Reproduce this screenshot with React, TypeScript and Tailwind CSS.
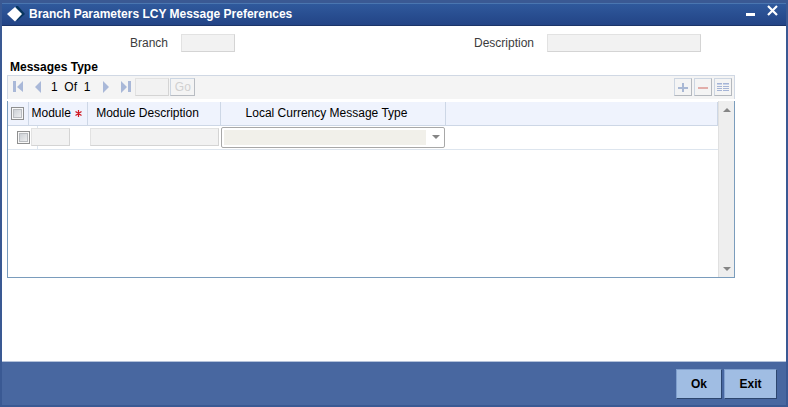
import type { ReactNode } from "react";

const field = "block border border-[#d4d4d4] border-t-[#e2e2e2] border-l-[#e2e2e2] bg-[#f2f2f2] h-[18px] text-xs px-1";
const checkbox =
  "appearance-none block h-[13px] w-[13px] shrink-0 border border-[#8e8f8f] bg-linear-to-br from-[#c4c9cf] to-[#f6f6f6] shadow-[inset_0_0_0_1px_#f8f8f8,inset_0_0_0_2px_#b9bcc0]";

function Field({ id, label, width }: { id: string; label: string; width: string }) {
  return (
    <div className="flex items-center gap-[13px]">
      <label htmlFor={id} className="w-[161px] text-right text-[#3c3c3c]">
        {label}
      </label>
      <input id={id} disabled className={`${field} ${width}`} />
    </div>
  );
}

function NavButton({ label, children }: { label: string; children: ReactNode }) {
  return (
    <button type="button" aria-label={label} className="text-[#a9b8d8]">
      <svg width="12" height="12" viewBox="0 0 12 12" fill="currentColor">
        {children}
      </svg>
    </button>
  );
}

function ToolButton({ label, children }: { label: string; children: ReactNode }) {
  return (
    <button
      type="button"
      aria-label={label}
      className="flex h-[18px] w-[18px] items-center justify-center border border-[#b4b8be] border-t-[#cdd6e2] border-l-[#cdd6e2]"
    >
      <svg width="12" height="12" viewBox="0 0 12 12" shapeRendering="crispEdges">
        {children}
      </svg>
    </button>
  );
}

function Arrow({ up }: { up?: boolean }) {
  return (
    <svg width="8" height="4" viewBox="0 0 8 4" fill="#858585">
      <path d={up ? "M0 4L4 0L8 4Z" : "M0 0L4 4L8 0Z"} />
    </svg>
  );
}

const footerButton =
  "h-[30px] border border-[#7f9fce] border-r-[#2c466f] border-b-[#2c466f] bg-[#a0bde3] text-xs font-bold text-black";

export default function App() {
  return (
    <div className="flex min-h-screen flex-col border-2 border-t-[3px] border-[#3a5993] bg-white font-['Liberation_Sans',Arial,sans-serif] text-xs text-black">
      <header className="flex h-[23px] items-center border-t border-b border-t-[#4a76b0] border-b-[#1b3468] bg-linear-to-b from-[#2f599c] to-[#234486] pr-2 pl-[5px] text-white">
        <svg width="18" height="16" viewBox="0 0 18 16" className="mb-[2px]">
          <path d="M9 0H11L18 8L10 15Z" fill="#07365f" />
          <path d="M8 1L15 8L8 15.500L0 8Z" fill="#fff" />
        </svg>
        <h1 className="ml-1 flex-1 pb-px text-xs font-bold">Branch Parameters LCY Message Preferences</h1>
        <button type="button" aria-label="Minimize" className="mr-3 mb-2">
          <svg width="9" height="12" viewBox="0 0 9 12">
            <path d="M0 8h9v3H0z" fill="#fff" />
          </svg>
        </button>
        <button type="button" aria-label="Close" className="mb-2">
          <svg width="11" height="11" viewBox="0 0 11 11">
            <path d="M1 1L10 10M10 1L1 10" stroke="#fff" strokeWidth="2.200" />
          </svg>
        </button>
      </header>

      <main className="flex-1 pt-2 pr-[51px] pb-4 pl-[5px]">
        <div className="grid grid-cols-2 gap-x-1">
          <Field id="branch" label="Branch" width="w-[54px]" />
          <Field id="description" label="Description" width="w-[154px]" />
        </div>

        <h2 className="mt-[7px] pl-[3px] text-xs leading-4 font-bold">Messages Type</h2>

        <div className="flex h-6 items-center border-t border-r border-l border-[#d0d8e4] bg-[#f4f4f4] pr-[2px] pb-px pl-[5px]">
          <div className="flex gap-2">
            <NavButton label="First">
              <path d="M0 0h3v11H0zM10 0v11L4 6z" />
            </NavButton>
            <NavButton label="Previous">
              <path d="M8 0v12L2 6z" />
            </NavButton>
          </div>
          <span className="ml-[6px]">1&nbsp; Of&nbsp; 1</span>
          <div className="ml-3 flex gap-[6px]">
            <NavButton label="Next">
              <path d="M1 0v12L7 6z" />
            </NavButton>
            <NavButton label="Last">
              <path d="M8 0h3v11H8zM1 0v12L7 6z" />
            </NavButton>
          </div>
          <input aria-label="Page" disabled className={`${field} ml-[3px] w-[34px]`} />
          <button
            type="button"
            disabled
            className="ml-px h-[18px] w-[25px] border border-[#b8bcc2] border-t-[#ccd6e2] border-l-[#ccd6e2] text-[#d0d0d0]"
          >
            Go
          </button>
          <div className="ml-auto flex gap-[2px]">
            <ToolButton label="Add row">
              <path d="M5 2h2v9H5zM1 6h10v2H1z" fill="#a9b8d4" />
            </ToolButton>
            <ToolButton label="Delete row">
              <path d="M1 6h10v2H1z" fill="#e2aeaa" />
            </ToolButton>
            <ToolButton label="Single record view">
              <path d="M0 2h5v1H0zM6 2h6v1H6zM0 5h5v1H0zM6 5h6v1H6zM0 7h5v1H0zM6 7h6v1H6zM0 9h5v1H0zM6 9h6v1H6z" fill="#a5b4d6" />
              <path d="M0 3h5v1H0zM6 3h6v1H6z" fill="#c9d3e8" />
            </ToolButton>
          </div>
        </div>

        <div className="mt-[2px] flex h-[177px] border-r border-b border-l border-[#7a9cbc]">
          <div className="flex-1 pt-px">
            <table className="w-full table-fixed border-collapse">
              <colgroup>
                <col className="w-[20px]" />
                <col className="w-[59px]" />
                <col className="w-[133px]" />
                <col className="w-[225px]" />
                <col />
              </colgroup>
              <thead>
                <tr className="h-[23px] bg-[#eff3fd] *:border-r *:border-b *:border-[#cdd7e6] *:py-0 *:pl-0 *:font-normal">
                  <th className="pr-0">
                    <input type="checkbox" aria-label="Select all rows" className={`${checkbox} mx-auto`} />
                  </th>
                  <th className="pr-0">
                    <div className="flex items-center gap-1 pl-[3px]">
                      Module
                      <svg width="7" height="7" viewBox="0 0 7 7" role="img" aria-label="required">
                        <path d="M3.500 0V7M0.500 1.500L6.500 5.500M6.500 1.500L0.500 5.500" stroke="#d01822" strokeWidth="1.200" />
                      </svg>
                    </div>
                  </th>
                  <th className="pr-3">Module Description</th>
                  <th className="pr-3">Local Currency Message Type</th>
                  <th className="pr-0" />
                </tr>
              </thead>
              <tbody>
                <tr className="h-6 border-b border-[#dde5ee] *:p-0">
                  <td>
                    <label className="flex h-[23px] w-[30px] items-center border-r border-[#dde5ee] pl-[9px]">
                      <input type="checkbox" aria-label="Select row" className={checkbox} />
                    </label>
                  </td>
                  <td className="relative">
                    <input aria-label="Module" disabled className={`${field} ml-[3px] w-[39px]`} />
                  </td>
                  <td>
                    <input aria-label="Module Description" disabled className={`${field} ml-[3px] w-[129px]`} />
                  </td>
                  <td>
                    <div className="ml-px flex h-[21px] items-center rounded-xs border border-[#a8a8a8] pr-1 pl-[2px]">
                      <select
                        aria-label="Local Currency Message Type"
                        disabled
                        className="h-[15px] flex-1 appearance-none bg-[#f1f0ea] opacity-100"
                      />
                      <span className="ml-[6px]">
                        <Arrow />
                      </span>
                    </div>
                  </td>
                  <td />
                </tr>
              </tbody>
            </table>
          </div>
          <div className="flex w-4 flex-col items-center justify-between border-l border-[#e0e0e0] bg-[#eeeeee] pt-[7px] pb-[6px]">
            <Arrow up />
            <Arrow />
          </div>
        </div>
      </main>

      <footer className="flex h-11 items-center justify-end gap-[2px] border-t border-[#b4c2da] bg-[#4867a0] pr-[9px]">
        <button type="button" className={`${footerButton} w-[46px]`}>
          Ok
        </button>
        <button type="button" className={`${footerButton} w-[53px]`}>
          Exit
        </button>
      </footer>
    </div>
  );
}
